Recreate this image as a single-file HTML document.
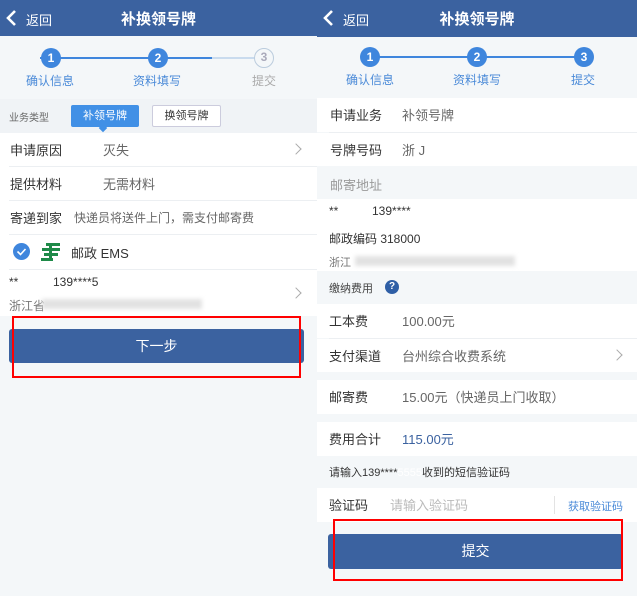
<!DOCTYPE html>
<html><head><meta charset="utf-8"><style>
*{margin:0;padding:0;box-sizing:border-box}
body{width:637px;height:596px;overflow:hidden;position:relative;background:#fff;font-family:"Liberation Sans","Noto Sans CJK SC",sans-serif;color:#333}
.p{position:absolute;top:0;height:596px;background:#f4f7f9;overflow:hidden}
.a{position:absolute}
.hd{position:absolute;left:0;top:0;right:0;height:37px;background:#3b62a0;color:#fff}
.hd .t{position:absolute;left:0;right:0;top:8px;text-align:center;font-size:15px;font-weight:bold}
.hd .b{position:absolute;left:26px;top:10px;font-size:13px}
.hd svg{position:absolute;left:5px;top:9px}
.row{position:absolute;left:0;right:0;background:#fff;font-size:13px}
.row .l{position:absolute;left:10px;top:7px;color:#333}
.row .v{position:absolute;top:7px;color:#666}
.ln{position:absolute;left:9px;right:0;height:1px;background:#eceff2}
.dot{position:absolute;width:20px;height:20px;border-radius:50%;background:#3f86dd;color:#fff;font-size:12px;font-weight:bold;text-align:center;line-height:20px}
.sl{position:absolute;font-size:12px;color:#4a8ad8}
.chev{position:absolute;width:8px;height:8px;border-top:1.5px solid #aaa;border-right:1.5px solid #aaa;transform:rotate(45deg)}
.btn{position:absolute;background:#3b62a0;color:#fff;text-align:center;font-size:14px;border-radius:3px}
.red{position:absolute;border:2.5px solid #f00}
.blur{position:absolute;background:#e2e2e2;filter:blur(2px)}
</style></head><body>

<!-- LEFT -->
<div class="p" style="left:0;width:317px">
<div class="hd" style="height:36px"><svg width="14" height="18" viewBox="0 0 14 18"><path d="M10 2L3 9l7 7" fill="none" stroke="#fff" stroke-width="2.6"/></svg><span class="b">返回</span><div class="t">补换领号牌</div></div>
<div class="a" style="left:40px;top:57px;width:120px;height:2px;background:#3f86dd"></div>
<div class="a" style="left:160px;top:57px;width:52px;height:2px;background:#3f86dd"></div>
<div class="a" style="left:212px;top:57px;width:50px;height:2px;background:#c9dbee"></div>
<div class="dot" style="left:41px;top:48px">1</div>
<div class="dot" style="left:148px;top:48px">2</div>
<div class="dot" style="left:254px;top:48px;background:#f4f7f9;border:1.5px solid #bcd;color:#aab;line-height:17px">3</div>
<div class="sl" style="left:26px;top:72px">确认信息</div>
<div class="sl" style="left:133px;top:72px">资料填写</div>
<div class="sl" style="left:252px;top:72px;color:#aaa">提交</div>
<div class="a" style="left:0;top:99px;width:317px;height:34px;background:#f0f3f6"></div>
<div class="a" style="left:9px;top:109px;font-size:10px;color:#666">业务类型</div>
<div class="a" style="left:71px;top:105px;width:68px;height:22px;background:#4190e6;color:#fff;font-size:11px;text-align:center;line-height:22px;border-radius:2px">补领号牌</div>
<div class="a" style="left:100px;top:125px;width:6px;height:6px;background:#4190e6;transform:rotate(45deg)"></div>
<div class="a" style="left:152px;top:105px;width:69px;height:22px;background:#fff;border:1px solid #ccd;color:#333;font-size:11px;text-align:center;line-height:20px;border-radius:2px">换领号牌</div>
<div class="row" style="top:133px;height:183px"></div>
<div class="row" style="top:133px;height:33px"><span class="l">申请原因</span><span class="v" style="left:103px">灭失</span><div class="chev" style="left:292px;top:12px"></div></div>
<div class="ln" style="top:166px"></div>
<div class="row" style="top:167px;height:33px"><span class="l">提供材料</span><span class="v" style="left:103px">无需材料</span></div>
<div class="ln" style="top:200px"></div>
<div class="row" style="top:201px;height:33px"><span class="l">寄递到家</span><span class="v" style="left:74px;font-size:12px;top:8px">快递员将送件上门，需支付邮寄费</span></div>
<div class="ln" style="top:234px"></div>
<div class="a" style="left:13px;top:243px;width:17px;height:17px;border-radius:50%;background:#3f86dd"><svg width="17" height="17"><path d="M4.5 8.5l3 3 5-5.5" fill="none" stroke="#fff" stroke-width="1.6"/></svg></div>
<svg class="a" style="left:40px;top:242px" width="22" height="20" viewBox="0 0 22 20"><g fill="#1e8a48"><rect x="6" y="1" width="14" height="3"/><rect x="2" y="6" width="18" height="3"/><rect x="4" y="11" width="14" height="3"/><rect x="1" y="16" width="12" height="3"/><rect x="9" y="4" width="3" height="13"/></g></svg>
<div class="a" style="left:71px;top:243px;font-size:13px">邮政 EMS</div>
<div class="ln" style="top:269px"></div>
<div class="a" style="left:9px;top:275px;font-size:12px">**</div>
<div class="a" style="left:53px;top:275px;font-size:12px">139****5</div>
<div class="a" style="left:9px;top:297px;font-size:12px;color:#777">浙江省</div>
<div class="blur" style="left:42px;top:299px;width:160px;height:10px"></div>
<div class="chev" style="left:292px;top:289px"></div>
<div class="btn" style="left:9px;top:329px;width:295px;height:34px;line-height:34px">下一步</div>
<div class="red" style="left:12px;top:316px;width:289px;height:62px"></div>
</div>

<!-- RIGHT -->
<div class="p" style="left:317px;width:320px">
<div class="hd"><svg width="14" height="18" viewBox="0 0 14 18"><path d="M10 2L3 9l7 7" fill="none" stroke="#fff" stroke-width="2.6"/></svg><span class="b">返回</span><div class="t">补换领号牌</div></div>
<div class="a" style="left:55px;top:56px;width:215px;height:2px;background:#3f86dd"></div>
<div class="dot" style="left:43px;top:47px">1</div>
<div class="dot" style="left:150px;top:47px">2</div>
<div class="dot" style="left:257px;top:47px">3</div>
<div class="sl" style="left:29px;top:71px">确认信息</div>
<div class="sl" style="left:136px;top:71px">资料填写</div>
<div class="sl" style="left:254px;top:71px">提交</div>
<div class="row" style="top:98px;height:34px"><span class="l" style="left:13px">申请业务</span><span class="v" style="left:85px">补领号牌</span></div>
<div class="ln" style="top:132px;left:12px"></div>
<div class="row" style="top:133px;height:33px"><span class="l" style="left:13px">号牌号码</span><span class="v" style="left:85px">浙 J</span></div>
<div class="a" style="left:13px;top:175px;font-size:13px;color:#999">邮寄地址</div>
<div class="row" style="top:199px;height:72px"></div>
<div class="a" style="left:12px;top:204px;font-size:12px">**</div>
<div class="a" style="left:55px;top:204px;font-size:12px">139****</div>
<div class="a" style="left:12px;top:230px;font-size:12px">邮政编码 318000</div>
<div class="a" style="left:12px;top:254px;font-size:11px;color:#777">浙江</div>
<div class="blur" style="left:38px;top:256px;width:160px;height:10px"></div>
<div class="a" style="left:12px;top:280px;font-size:11px;color:#444">缴纳费用</div>
<div class="a" style="left:68px;top:280px;width:14px;height:14px;border-radius:50%;background:#2f5fa6;color:#fff;font-size:10px;font-weight:bold;text-align:center;line-height:14px">?</div>
<div class="row" style="top:304px;height:34px"><span class="l" style="left:12px">工本费</span><span class="v" style="left:85px">100.00元</span></div>
<div class="ln" style="top:338px;left:12px"></div>
<div class="row" style="top:339px;height:33px"><span class="l" style="left:12px">支付渠道</span><span class="v" style="left:85px">台州综合收费系统</span><div class="chev" style="left:296px;top:12px"></div></div>
<div class="row" style="top:380px;height:34px"><span class="l" style="left:12px">邮寄费</span><span class="v" style="left:85px">15.00元（快递员上门收取）</span></div>
<div class="row" style="top:422px;height:34px"><span class="l" style="left:12px">费用合计</span><span class="v" style="left:85px;color:#3b62a0">115.00元</span></div>
<div class="a" style="left:12px;top:464px;font-size:11px;color:#333">请输入139****<span style="color:#fff">5555</span>收到的短信验证码</div>
<div class="row" style="top:488px;height:34px"><span class="l" style="left:12px">验证码</span><span class="v" style="left:73px;color:#bbb">请输入验证码</span><div class="a" style="left:237px;top:8px;width:1px;height:18px;background:#e3e3e3"></div><span class="a" style="left:251px;top:10px;font-size:11px;color:#4a8ad8">获取验证码</span></div>
<div class="btn" style="left:11px;top:534px;width:295px;height:35px;line-height:35px">提交</div>
<div class="red" style="left:16px;top:519px;width:290px;height:62px"></div>
</div>
</body></html>
